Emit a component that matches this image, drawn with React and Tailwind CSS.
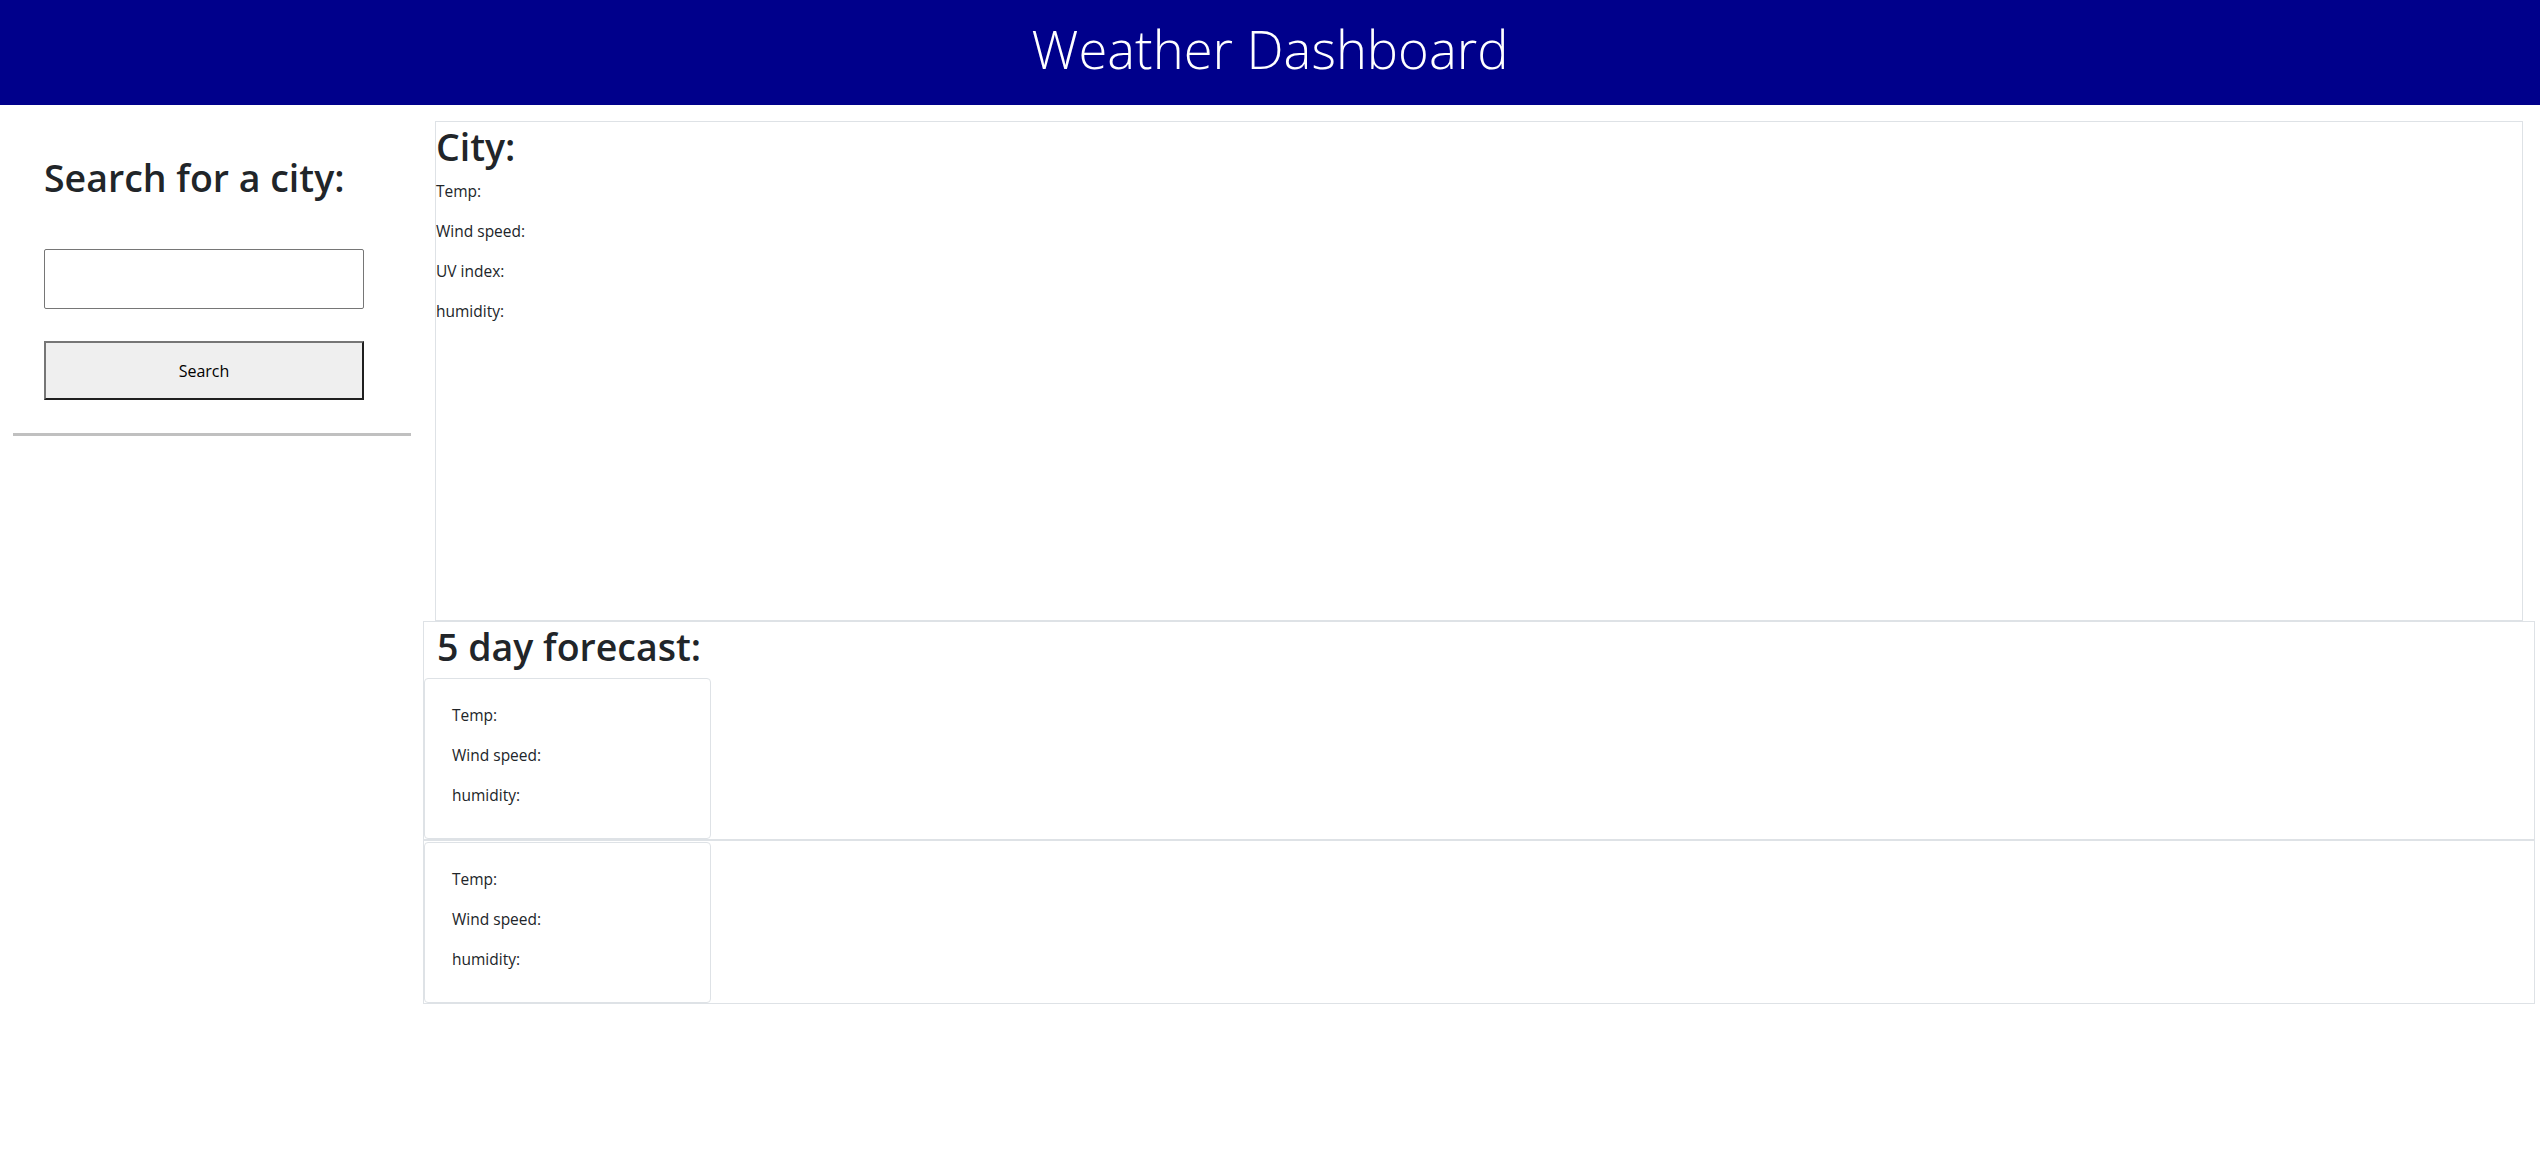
import React from "react";

function Line({ children }) {
  return <p className="m-0 text-[15.5px] leading-[24px] text-[#212529]">{children}</p>;
}

function ForecastCard() {
  return (
    <div className="w-[287px] h-[161px] shrink-0 border border-[#dee2e6] rounded-[4px] pl-[27px] pt-[24px] flex flex-col gap-[16px]">
      <Line>Temp:</Line>
      <Line>Wind speed:</Line>
      <Line>humidity:</Line>
    </div>
  );
}

export default function App() {
  return (
    <div className="min-h-screen bg-white font-['Open_Sans',sans-serif] text-[#212529]">
      <header className="h-[105px] bg-[#00008b] flex items-center justify-center pb-[6px]">
        <h1 className="m-0 text-[52.5px] leading-none font-light text-white">Weather Dashboard</h1>
      </header>
      <div className="flex">
        <aside className="w-[423px] shrink-0 pt-[50px]">
          <h2 className="ml-[44px] m-0 text-[37.5px] leading-[46px] font-semibold">Search for a city:</h2>
          <input
            type="text"
            className="block ml-[44px] mt-[48px] w-[320px] h-[60px] border border-[#767676] rounded-[2px] bg-white outline-none px-2"
          />
          <button className="block ml-[44px] mt-[32px] w-[320px] h-[59px] bg-[#efefef] border-2 border-t-[#767676] border-l-[#767676] border-r-[#1f1f1f] border-b-[#1f1f1f] text-[16px] text-black">
            Search
          </button>
          <div className="ml-[13px] mt-[33px] w-[398px] h-[3px] bg-[#c0c0c0]" />
        </aside>
        <main className="w-[2112px] shrink-0">
          <section className="mx-[12px] mt-[16px] h-[500px] border border-[#dee2e6] pt-[2px]">
            <h2 className="m-0 text-[37.5px] leading-[46px] font-semibold">City:</h2>
            <div className="mt-[9px] flex flex-col gap-[16px]">
              <Line>Temp:</Line>
              <Line>Wind speed:</Line>
              <Line>UV index:</Line>
              <Line>humidity:</Line>
            </div>
          </section>
          <section className="border border-[#dee2e6] pt-[2px]">
            <h2 className="m-0 pl-[13px] text-[37.5px] leading-[46px] font-semibold">5 day forecast:</h2>
            <div className="mt-[8px] flex flex-col">
              <div className="flex border-b-2 border-[#dee2e6]">
                <ForecastCard />
              </div>
              <div className="flex mt-[1px]">
                <ForecastCard />
              </div>
            </div>
          </section>
        </main>
      </div>
    </div>
  );
}
